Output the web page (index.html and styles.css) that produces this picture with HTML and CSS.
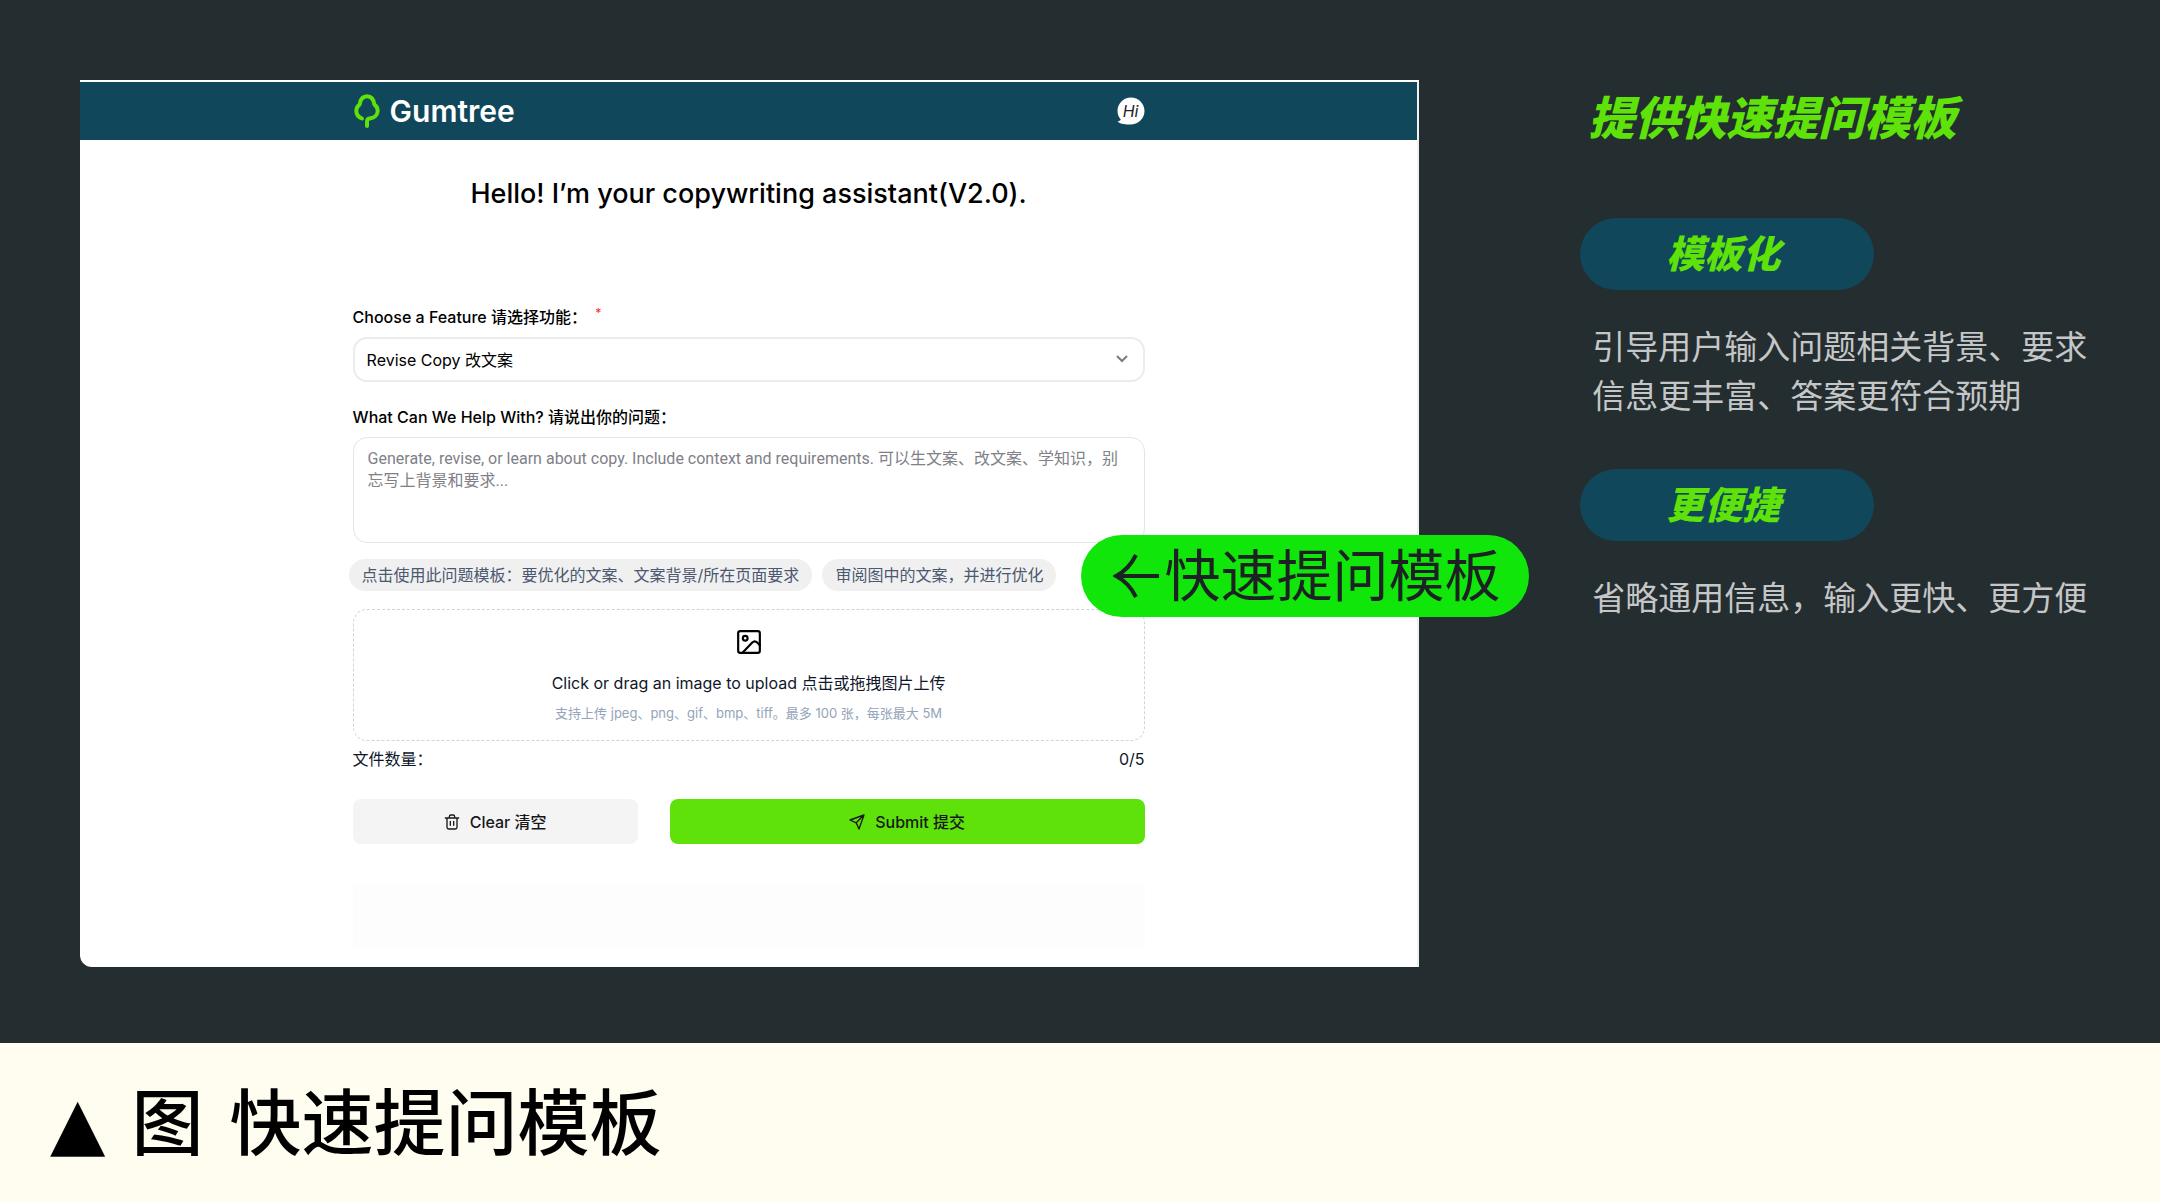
FILE: index.html
```html
<!DOCTYPE html>
<html lang="zh-CN">
<head>
  <meta charset="UTF-8" />
  <meta name="viewport" content="width=device-width, initial-scale=1.0"/>
  <title>快速提问模板</title>
  <link rel="stylesheet" href="styles.css">
</head>
<body>
  <main class="stage">
    <section class="panel">
      <header class="topbar">
        <div class="topbar-inner">
          <a class="logo" href="#">
            <svg width="26" height="34" viewBox="0 0 26 34" fill="none" stroke="#5ee20a" stroke-width="4" stroke-linecap="round" stroke-linejoin="round" aria-hidden="true">
              <path d="M8 24.500C4 23 2.300 20 2.300 16.800C2.300 14 3.500 12 5.600 10.600C6.300 5.500 9 2.200 13 2.200C17 2.200 19.700 5.500 20.400 10.600C22.500 12 23.700 14 23.700 16.800C23.700 21 20.500 23.800 16.500 24.300C14 24.600 13 25.600 13 27.500V32"/>
            </svg>
            <span>Gumtree</span>
          </a>
          <a class="hi" href="#">
            <svg width="28" height="28" viewBox="0 0 28 28" aria-hidden="true">
              <path fill="#fff" d="M14 0.500C21.500 0.500 27.500 6.500 27.500 14C27.500 21.500 21.500 27.500 13 27.500C9 27.500 4 27.300 0.500 24.500C2 24.200 3.300 23.500 3.800 22.500C1.800 20.300 0.500 17.300 0.500 14C0.500 6.500 6.500 0.500 14 0.500Z"/>
            </svg>
            <span>Hi</span>
          </a>
        </div>
      </header>

      <form class="ask" onsubmit="return false">
        <h1>Hello! I’m your copywriting assistant(V2.0).</h1>

        <label for="feature">Choose a Feature 请选择功能： <sup>*</sup></label>
        <div class="select-box">
          <select id="feature">
            <option>Revise Copy 改文案</option>
          </select>
          <svg width="12" height="8" viewBox="0 0 12 8" fill="none" stroke="#7b7b80" stroke-width="2" aria-hidden="true"><path d="M1 1L6 6L11 1"/></svg>
        </div>

        <label for="question">What Can We Help With? 请说出你的问题：</label>
        <textarea id="question" placeholder="Generate, revise, or learn about copy. Include context and requirements. 可以生文案、改文案、学知识，别忘写上背景和要求..."></textarea>

        <div class="templates">
          <button type="button">点击使用此问题模板：要优化的文案、文案背景/所在页面要求</button>
          <button type="button">审阅图中的文案，并进行优化</button>
          <div class="callout">
            <svg width="46" height="62" viewBox="0 0 46 62" fill="none" stroke="#1d2123" stroke-width="4" aria-hidden="true"><path d="M46 31H3M23 10C18 20 11 27 3 31C11 35 18 42 23 52"/></svg>
            <span>快速提问模板</span>
          </div>
        </div>

        <button type="button" class="upload">
          <svg width="26" height="26" viewBox="0 0 24 24" fill="none" stroke="#000" stroke-width="2" stroke-linecap="round" stroke-linejoin="round" aria-hidden="true">
            <rect x="2" y="2" width="20" height="20" rx="2"/>
            <circle cx="8.500" cy="8.500" r="2.200"/>
            <path d="M22 15L19.500 12.500C18 11 16.500 11 15 12.500L6 22"/>
          </svg>
          <span class="upload-title">Click or drag an image to upload 点击或拖拽图片上传</span>
          <span class="upload-hint">支持上传 jpeg、png、gif、bmp、tiff。最多 100 张，每张最大 5M</span>
        </button>
        <div class="count"><span>文件数量：</span><span>0/5</span></div>

        <div class="actions">
          <button type="button" class="clear">
            <svg width="16" height="16" viewBox="0 0 24 24" fill="none" stroke="currentColor" stroke-width="2" stroke-linecap="round" stroke-linejoin="round" aria-hidden="true"><path d="M2 6H22M4.500 6V20C4.500 21.500 5.500 22.500 7 22.500H17C18.500 22.500 19.500 21.500 19.500 20V6M8 6V4C8 2.500 9 1.500 10.500 1.500H13.500C15 1.500 16 2.500 16 4V6M9.500 11V17M14.500 11V17"/></svg>
            Clear 清空
          </button>
          <button type="submit" class="submit">
            <svg width="16" height="16" viewBox="0 0 24 24" fill="none" stroke="currentColor" stroke-width="2" stroke-linecap="round" stroke-linejoin="round" aria-hidden="true"><path d="M22.500 1.500L15 22.500L10.800 13.200L1.500 9ZM22.500 1.500L10.800 13.200"/></svg>
            Submit 提交
          </button>
        </div>

        <div class="answer"></div>
      </form>
    </section>

    <aside class="notes">
      <h2>提供快速提问模板</h2>
      <h3>模板化</h3>
      <p>引导用户输入问题相关背景、要求<br>信息更丰富、答案更符合预期</p>
      <h3>更便捷</h3>
      <p>省略通用信息，输入更快、更方便</p>
    </aside>
  </main>

  <footer class="caption">
    <span class="mark">▲</span>
    <span>图</span>
    <span>快速提问模板</span>
  </footer>
</body>
</html>
```
FILE: styles.css
```css
* {
  box-sizing: border-box;
}

body {
  margin: 0;
  background: #fffdf0;
  color: #000;
  font-family: Inter, "Noto Sans CJK SC", sans-serif;
  font-size: 16px;
  line-height: 22px;
}

button,
select,
textarea {
  font: inherit;
  color: inherit;
}

button {
  border: none;
  cursor: pointer;
}

.stage {
  display: flex;
  align-items: flex-start;
  padding: 80px 0 76px 80px;
  background: #242d30;
}

/* app window */
.panel {
  flex: none;
  width: 62vw;
  background: #fff;
  border-top: 2px solid #fff;
  border-right: 2px solid #f0eff2;
  border-bottom-left-radius: 12px;
}

.topbar {
  background: #10475b;
}

.topbar-inner {
  display: flex;
  justify-content: space-between;
  align-items: center;
  max-width: 792px;
  height: 58px;
  margin: 0 auto;
}

.logo {
  display: flex;
  align-items: center;
  gap: 10px;
  padding-left: 1px;
  color: #fff;
  font-size: 30px;
  font-weight: 600;
  text-decoration: none;
}

.hi {
  display: grid;
  place-items: center;
  color: #222;
  font-size: 16px;
  font-style: italic;
  text-decoration: none;
}

.hi svg,
.hi span {
  grid-area: 1 / 1;
}

.ask {
  display: flex;
  flex-direction: column;
  max-width: 792px;
  margin: 0 auto;
  padding-bottom: 20px;
}

.ask h1 {
  margin: 36px 0 94px;
  font-size: 27px;
  font-weight: 500;
  line-height: 36px;
  text-align: center;
}

.ask label {
  margin-bottom: 9px;
  font-weight: 500;
}

.ask sup {
  margin-left: 4px;
  color: #f04040;
  font-size: 12px;
  line-height: 0;
}

.select-box {
  position: relative;
  margin-bottom: 24px;
}

.select-box select {
  display: block;
  width: 100%;
  height: 45px;
  padding: 0 12px;
  appearance: none;
  background: #fff;
  border: 2px solid #ececee;
  border-radius: 14px;
}

.select-box svg {
  position: absolute;
  right: 17px;
  top: 18px;
}

.ask textarea {
  height: 106px;
  margin-bottom: 16px;
  padding: 10px 14px;
  resize: none;
  border: 1px solid #e4e4e7;
  border-radius: 14px;
  font-family: Roboto, "Noto Sans CJK SC", sans-serif;
}

.ask textarea::placeholder {
  color: #808088;
}

.templates {
  position: relative;
  display: flex;
  gap: 10px;
  margin: 0 -4px 18px;
}

.templates button {
  height: 32px;
  padding: 0 13px;
  background: #f0f0f1;
  border-radius: 16px;
  color: #4b5870;
}

/* floats over the right edge of the window */
.callout {
  position: absolute;
  left: 732px;
  top: -24px;
  display: flex;
  align-items: center;
  gap: 6px;
  height: 82px;
  padding: 0 28px 0 32px;
  background: #10e60a;
  border-radius: 41px;
  color: #1d2123;
  font-size: 56px;
  white-space: nowrap;
}

.upload {
  display: flex;
  flex-direction: column;
  align-items: center;
  height: 132px;
  padding: 19px 0 0;
  background: #fff;
  border: 1px dashed #cbd5e1;
  border-radius: 14px;
  color: #0f172a;
}

.upload-title {
  margin: 17px 0 8px;
}

.upload-hint {
  color: #94a3b8;
  font-size: 13px;
}

.count {
  display: flex;
  justify-content: space-between;
  margin: 7px 0 29px;
  color: #0f172a;
}

.actions {
  display: grid;
  grid-template-columns: 3fr 5fr;
  gap: 32px;
  margin-bottom: 41px;
}

.actions button {
  display: flex;
  justify-content: center;
  align-items: center;
  gap: 10px;
  height: 45px;
  border-radius: 8px;
  color: #18181b;
  font-weight: 500;
}

.clear {
  background: #f4f4f4;
}

.submit {
  background: #5ee20a;
}

.answer {
  height: 62px;
  background: #fdfdfd;
}

/* notes beside the window */
.notes {
  flex: 1;
  margin-left: 161px;
}

.notes h2,
.notes h3 {
  margin: 0;
  color: #5ee20a;
  font-style: italic;
  font-weight: 900;
}

.notes h2 {
  margin: 12px 0 74px 8px;
  font-size: 46px;
  line-height: 52px;
  white-space: nowrap;
}

.notes h3 {
  width: 294px;
  padding-right: 8px;
  background: #10475b;
  border-radius: 36px;
  font-size: 38px;
  line-height: 72px;
  text-align: center;
}

.notes p {
  margin: 33px 0 48px 12px;
  color: #c4c6c7;
  font-size: 33px;
  line-height: 49px;
  white-space: nowrap;
}

.caption {
  display: flex;
  gap: 26px;
  padding: 36px 50px;
  font-size: 72px;
  font-weight: 500;
  line-height: 88px;
}

.mark {
  font-family: "DejaVu Sans", sans-serif;
}
```
